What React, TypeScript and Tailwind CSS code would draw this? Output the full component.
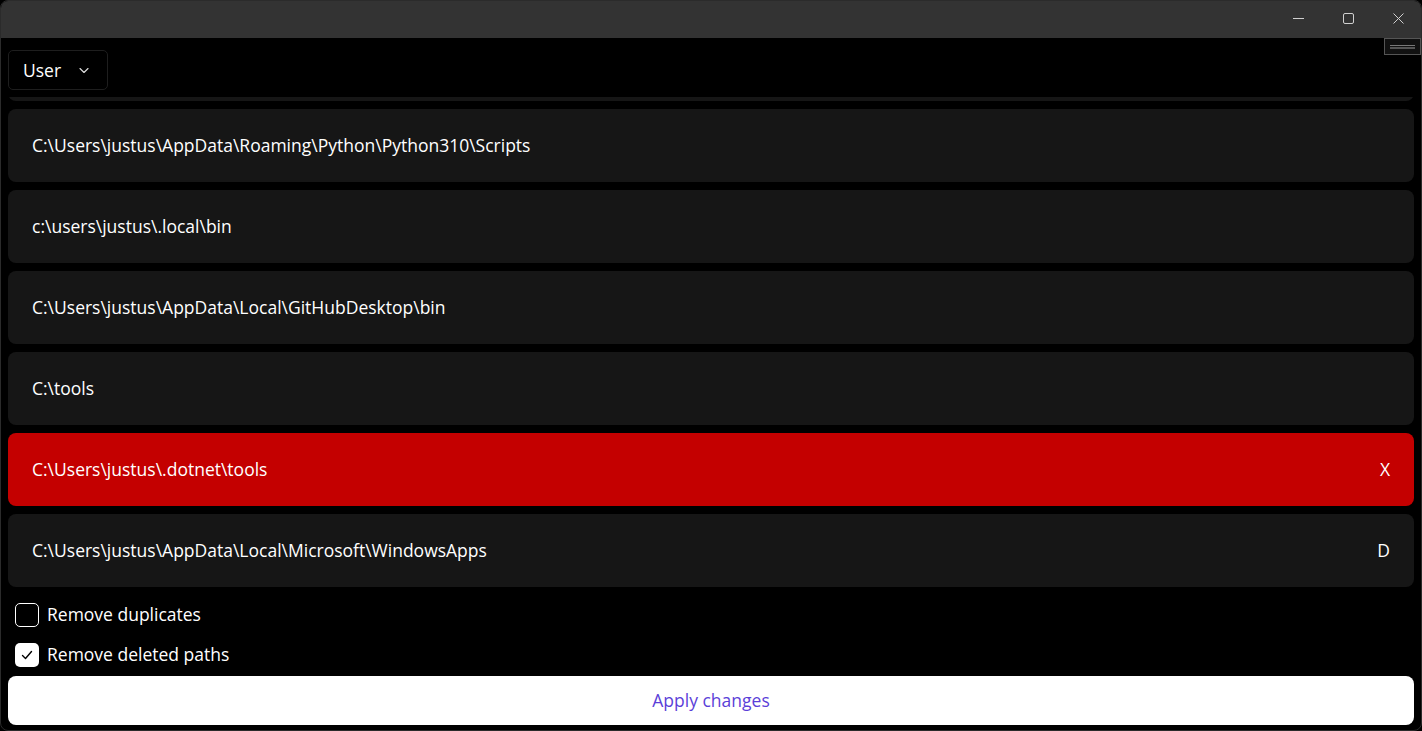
import React, { useState } from 'react';

type PathEntry = {
  path: string;
  state: 'ok' | 'deleted' | 'duplicate';
};

const paths: PathEntry[] = [
  { path: 'C:\\Users\\justus\\AppData\\Roaming\\Python\\Python310\\Scripts', state: 'ok' },
  { path: 'c:\\users\\justus\\.local\\bin', state: 'ok' },
  { path: 'C:\\Users\\justus\\AppData\\Local\\GitHubDesktop\\bin', state: 'ok' },
  { path: 'C:\\tools', state: 'ok' },
  { path: 'C:\\Users\\justus\\.dotnet\\tools', state: 'deleted' },
  { path: 'C:\\Users\\justus\\AppData\\Local\\Microsoft\\WindowsApps', state: 'duplicate' },
];

const Checkbox = ({ checked, label, onChange }: { checked: boolean; label: string; onChange: () => void }) => (
  <label className="flex items-center gap-2 h-6 cursor-pointer select-none" onClick={onChange}>
    <span
      className={`w-6 h-6 rounded-[5px] flex items-center justify-center ${
        checked ? 'bg-white' : 'border border-white'
      }`}
    >
      {checked && (
        <svg width="14" height="14" viewBox="0 0 14 14" fill="none">
          <path d="M2.5 7.5 L5.5 10.5 L11.5 3.5" stroke="#000" strokeWidth="1.4" strokeLinecap="round" strokeLinejoin="round" />
        </svg>
      )}
    </span>
    <span className="text-[17.5px] text-white leading-none">{label}</span>
  </label>
);

const App = () => {
  const [removeDuplicates, setRemoveDuplicates] = useState(false);
  const [removeDeleted, setRemoveDeleted] = useState(true);

  return (
    <div className="w-[1422px] h-[731px] bg-black overflow-hidden" style={{ fontFamily: '"Open Sans", "Noto Sans", sans-serif' }}>
      <div className="w-full h-full rounded-lg border border-[#2b2b2b] bg-black flex flex-col overflow-hidden">
        {/* Title bar */}
        <div className="h-[37px] shrink-0 bg-[#333333] flex justify-end items-start pt-[12px]">
          <button className="w-[46px] h-[11px] flex items-center justify-center">
            <svg width="11" height="11" viewBox="0 0 11 11">
              <path d="M0 5.5 H11" stroke="#d0d0d0" strokeWidth="1" />
            </svg>
          </button>
          <button className="w-[46px] h-[11px] flex items-center justify-center ml-1">
            <svg width="11" height="11" viewBox="0 0 11 11" fill="none">
              <rect x="0.5" y="0.5" width="10" height="10" rx="1.5" stroke="#d0d0d0" strokeWidth="1" />
            </svg>
          </button>
          <button className="w-[46px] h-[11px] flex items-center justify-center ml-1">
            <svg width="11" height="11" viewBox="0 0 11 11">
              <path d="M0.5 0.5 L10.5 10.5 M10.5 0.5 L0.5 10.5" stroke="#d0d0d0" strokeWidth="1" />
            </svg>
          </button>
        </div>

        {/* Top bar with dropdown */}
        <div className="relative h-[59px] shrink-0 px-[7px] pt-[12px]">
          <button className="h-[40px] w-[100px] rounded-[5px] border border-[#1e1e1e] bg-black flex items-center pl-[14px] text-white text-[17.5px]">
            <span>User</span>
            <svg className="ml-[17px]" width="12" height="12" viewBox="0 0 12 12" fill="none">
              <path d="M2 4.5 L6 8.5 L10 4.5" stroke="#e0e0e0" strokeWidth="1.1" strokeLinecap="round" strokeLinejoin="round" />
            </svg>
          </button>
          <div className="absolute right-0 top-0 w-[37px] h-[17px] border border-[#555] bg-[#111] flex flex-col justify-center gap-[1px] px-[5px]">
            <div className="h-[1px] bg-[#777]" />
            <div className="h-[2px] bg-[#555]" />
          </div>
        </div>

        {/* Path list */}
        <div className="h-[493px] shrink-0 overflow-hidden px-[7px]">
          <div className="flex flex-col gap-[8px] -mt-[68px]">
            <div className="h-[72px] rounded-lg bg-[#161616]" />
            {paths.map((p) => (
              <div
                key={p.path}
                className={`h-[73px] rounded-lg flex items-center justify-between px-[24px] text-white text-[17.5px] ${
                  p.state === 'deleted' ? 'bg-[#c40000]' : 'bg-[#161616]'
                }`}
              >
                <span>{p.path}</span>
                {p.state === 'deleted' && <span>X</span>}
                {p.state === 'duplicate' && <span>D</span>}
              </div>
            ))}
          </div>
        </div>

        {/* Options */}
        <div className="flex flex-col gap-[16px] px-[14px] pt-[13px]">
          <Checkbox checked={removeDuplicates} label="Remove duplicates" onChange={() => setRemoveDuplicates(!removeDuplicates)} />
          <Checkbox checked={removeDeleted} label="Remove deleted paths" onChange={() => setRemoveDeleted(!removeDeleted)} />
        </div>

        <div className="px-[7px] pt-[9px]">
          <button className="w-full h-[49px] rounded-lg bg-white text-[#5b3fd8] text-[17.5px]">Apply changes</button>
        </div>
      </div>
    </div>
  );
};

export default App;
